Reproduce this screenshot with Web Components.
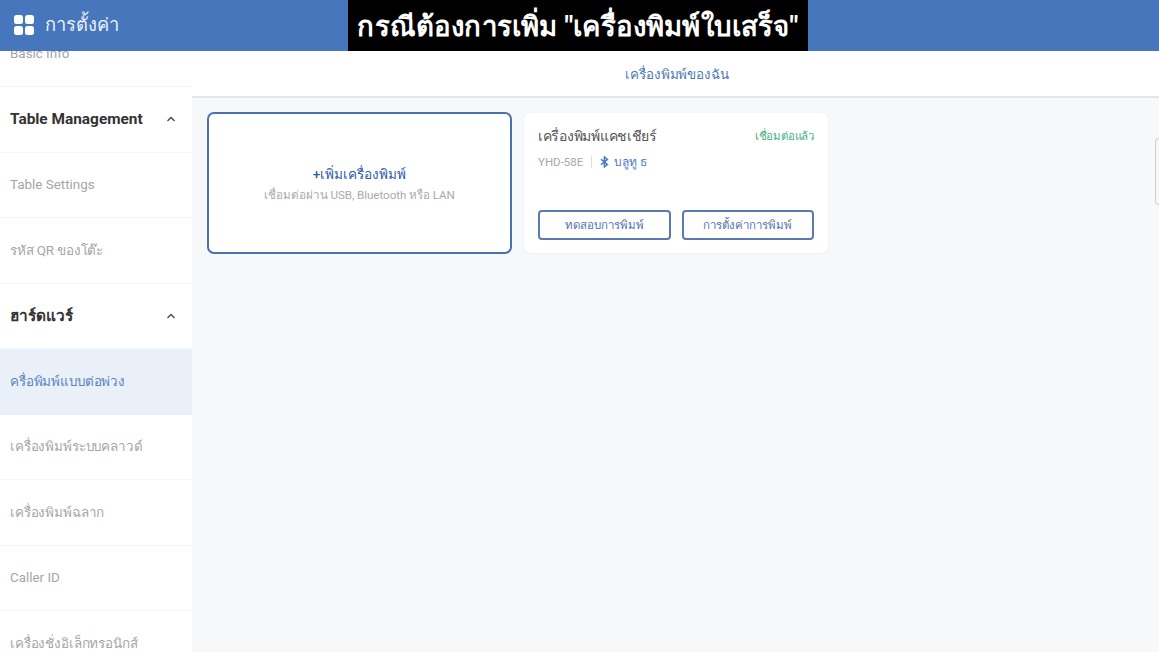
<!DOCTYPE html>
<html lang="th">
<head>
<meta charset="utf-8">
<style>
html,body{margin:0;height:100%;overflow:hidden;}
body{font-family:Roboto,"Noto Sans",sans-serif;}
</style>
</head>
<body>
<settings-app></settings-app>
<script>
const BT_ICON = `<svg width="9" height="12" viewBox="0 0 9 12" fill="none" stroke="currentColor" stroke-width="1.5"><path d="M1 3.2 7.4 8.6 4.4 11V1l3 2.4L1 8.8"/></svg>`;

class TopBar extends HTMLElement {
  constructor() {
    super();
    this.attachShadow({ mode: "open" });
    this.shadowRoot.innerHTML = `
<style>
:host{display:flex;align-items:center;height:51px;background:#4676bc;color:#fff;padding:0 0 2px 14px;gap:11px;box-sizing:border-box;position:relative;z-index:2;}
.grid{display:grid;grid-template-columns:9px 9px;grid-template-rows:9px 9px;gap:2px;}
.grid i{background:#fff;border-radius:2.5px;}
span{font-size:18.3px;color:#eef3fa;}
</style>
<div class="grid"><i></i><i></i><i></i><i></i></div>
<span><slot></slot></span>`;
  }
}

class CaptionBox extends HTMLElement {
  constructor() {
    super();
    this.attachShadow({ mode: "open" });
    this.shadowRoot.innerHTML = `
<style>
:host{position:absolute;left:348px;top:0;width:460px;height:51px;background:#000;color:#fff;display:flex;align-items:center;justify-content:center;z-index:3;font-size:27.6px;letter-spacing:.16px;font-weight:700;white-space:nowrap;}
</style>
<slot></slot>`;
  }
}

class NavRow extends HTMLElement {
  constructor() {
    super();
    this.attachShadow({ mode: "open" });
    this.shadowRoot.innerHTML = `
<style>
:host{display:flex;align-items:center;justify-content:space-between;height:65.5px;box-sizing:border-box;padding:0 16px 0 10px;border-bottom:1px solid #f4f5f6;font-size:13.4px;color:#a4a6a9;white-space:nowrap;flex:none;}
:host([thai]){letter-spacing:-.15px;}
:host([group]){font-size:15.4px;font-weight:700;color:#333;}
:host([active]){background:#eaf0f8;color:#5b83c2;border-bottom-color:#eaf0f8;}
svg{display:none;}
:host([group]) svg{display:block;}
</style>
<span><slot></slot></span>
<svg width="10" height="6" viewBox="0 0 10 6" fill="none" stroke="#444" stroke-width="1.3"><path d="M1.5 5 5 1.5 8.5 5"/></svg>`;
  }
}

class SideBar extends HTMLElement {
  constructor() {
    super();
    this.attachShadow({ mode: "open" });
    this.shadowRoot.innerHTML = `
<style>
:host{display:block;width:192px;flex:none;background:#fff;overflow:hidden;}
.list{display:flex;flex-direction:column;margin-top:-29.5px;}
</style>
<div class="list"><slot></slot></div>`;
  }
}

class TabBar extends HTMLElement {
  constructor() {
    super();
    this.attachShadow({ mode: "open" });
    this.shadowRoot.innerHTML = `
<style>
:host{display:flex;align-items:center;justify-content:center;height:47px;box-sizing:border-box;background:#fff;border-bottom:2px solid #e3e5e8;font-size:13.4px;letter-spacing:-.1px;color:#4f78b8;padding:2px 0 0 3px;}
</style>
<slot></slot>`;
  }
}

class AddCard extends HTMLElement {
  constructor() {
    super();
    this.attachShadow({ mode: "open" });
    this.shadowRoot.innerHTML = `
<style>
:host{display:flex;flex-direction:column;align-items:center;justify-content:center;width:305px;height:142px;box-sizing:border-box;background:#fff;border:2px solid #4a70b0;border-radius:7px;padding-top:2px;}
.t{font-size:13.6px;font-weight:500;color:#2f5cab;line-height:20px;}
.s{font-size:11.6px;letter-spacing:-.05px;color:#a8aaad;line-height:18px;margin-top:2px;}
</style>
<div class="t"><slot name="title"></slot></div>
<div class="s"><slot name="sub"></slot></div>`;
  }
}

class PrinterCard extends HTMLElement {
  constructor() {
    super();
    this.attachShadow({ mode: "open" });
    this.shadowRoot.innerHTML = `
<style>
:host{display:flex;flex-direction:column;width:304px;height:140px;box-sizing:border-box;background:#fff;border-radius:7px;padding:12px 14px 13px;box-shadow:0 0 2px #e8ebf0;}
.head{display:flex;justify-content:space-between;align-items:flex-start;}
.name{font-size:14px;letter-spacing:-.27px;color:#555;line-height:22px;}
.status{font-size:11.5px;letter-spacing:-.2px;color:#48b083;line-height:18px;margin-top:2px;}
.meta{display:flex;align-items:center;font-size:11.5px;color:#a6a8ab;margin-top:6px;line-height:18px;}
.sep{width:1px;height:12px;background:#dcdee1;margin:0 8px;}
.bt{display:flex;align-items:center;gap:5px;color:#4f78c4;font-size:12px;}
.actions{display:flex;gap:11px;margin-top:auto;}
</style>
<div class="head"><div class="name"><slot name="name"></slot></div><div class="status"><slot name="status"></slot></div></div>
<div class="meta"><slot name="model"></slot><span class="sep"></span><span class="bt">${BT_ICON}<slot name="link"></slot></span></div>
<div class="actions"><slot></slot></div>`;
  }
}

class OutlineBtn extends HTMLElement {
  constructor() {
    super();
    this.attachShadow({ mode: "open" });
    this.shadowRoot.innerHTML = `
<style>
:host{display:flex;align-items:center;justify-content:center;flex:1;height:30px;box-sizing:border-box;border:2px solid #5a7ab2;border-radius:4px;background:#fff;color:#5574ab;font-size:11.5px;font-weight:500;}
</style>
<slot></slot>`;
  }
}

class EdgeTab extends HTMLElement {
  constructor() {
    super();
    this.attachShadow({ mode: "open" });
    this.shadowRoot.innerHTML = `
<style>
:host{position:absolute;right:0;top:138px;width:4px;height:67px;box-sizing:border-box;background:#f7f8fa;border:1px solid #cfd1d4;border-right:0;border-radius:4px 0 0 4px;}
</style>`;
  }
}

class SettingsApp extends HTMLElement {
  constructor() {
    super();
    this.attachShadow({ mode: "open" });
    this.shadowRoot.innerHTML = `
<style>
:host{display:flex;flex-direction:column;height:652px;position:relative;overflow:hidden;background:#f6f8fa;}
.body{display:flex;flex:1;min-height:0;}
.main{flex:1;display:flex;flex-direction:column;min-width:0;}
.cards{display:flex;gap:12px;align-items:flex-start;padding:14px 15px;}
printer-card{margin-top:1px;}
</style>
<top-bar>การตั้งค่า</top-bar>
<caption-box>กรณีต้องการเพิ่ม "เครื่องพิมพ์ใบเสร็จ"</caption-box>
<div class="body">
  <side-bar>
    <nav-row>Basic Info</nav-row>
    <nav-row group>Table Management</nav-row>
    <nav-row>Table Settings</nav-row>
    <nav-row thai>รหัส QR ของโต๊ะ</nav-row>
    <nav-row group>ฮาร์ดแวร์</nav-row>
    <nav-row active thai>ครื่อพิมพ์แบบต่อพ่วง</nav-row>
    <nav-row thai>เครื่องพิมพ์ระบบคลาวด์</nav-row>
    <nav-row thai>เครื่องพิมพ์ฉลาก</nav-row>
    <nav-row>Caller ID</nav-row>
    <nav-row thai>เครื่องชั่งอิเล็กทรอนิกส์</nav-row>
  </side-bar>
  <div class="main">
    <tab-bar>เครื่องพิมพ์ของฉัน</tab-bar>
    <div class="cards">
      <add-card>
        <span slot="title">+เพิ่มเครื่องพิมพ์</span>
        <span slot="sub">เชื่อมต่อผ่าน USB, Bluetooth หรือ LAN</span>
      </add-card>
      <printer-card>
        <span slot="name">เครื่องพิมพ์แคชเชียร์</span>
        <span slot="status">เชื่อมต่อแล้ว</span>
        <span slot="model">YHD-58E</span>
        <span slot="link">บลูทู ธ</span>
        <outline-btn>ทดสอบการพิมพ์</outline-btn>
        <outline-btn>การตั้งค่าการพิมพ์</outline-btn>
      </printer-card>
    </div>
  </div>
</div>
<edge-tab></edge-tab>`;
  }
}

customElements.define("top-bar", TopBar);
customElements.define("caption-box", CaptionBox);
customElements.define("nav-row", NavRow);
customElements.define("side-bar", SideBar);
customElements.define("tab-bar", TabBar);
customElements.define("add-card", AddCard);
customElements.define("printer-card", PrinterCard);
customElements.define("outline-btn", OutlineBtn);
customElements.define("edge-tab", EdgeTab);
customElements.define("settings-app", SettingsApp);
</script>
</body>
</html>
